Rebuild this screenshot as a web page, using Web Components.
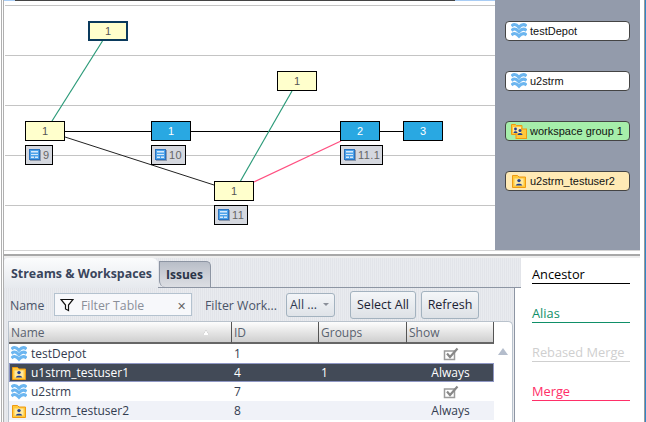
<!DOCTYPE html>
<html>
<head>
<meta charset="utf-8">
<style>
  html, body { margin: 0; padding: 0; background: #fff; }
  body { width: 646px; height: 422px; overflow: hidden; font-family: "Noto Sans", sans-serif; }
</style>
</head>
<body>
<app-window>
  <graph-view slot="graph">
    <graph-node x="88" y="21" selected>1</graph-node>
    <graph-node x="25" y="121">1</graph-node>
    <graph-node x="151" y="121" kind="stream">1</graph-node>
    <graph-node x="277" y="71">1</graph-node>
    <graph-node x="214" y="181">1</graph-node>
    <graph-node x="340" y="121" kind="stream">2</graph-node>
    <graph-node x="403" y="121" kind="stream">3</graph-node>
    <change-label x="25" y="145" w="28">9</change-label>
    <change-label x="151" y="145" w="35">10</change-label>
    <change-label x="214" y="205" w="34">11</change-label>
    <change-label x="340" y="145" w="43">11.1</change-label>
  </graph-view>
  <stream-list slot="streams">
    <stream-pill icon="stream">testDepot</stream-pill>
    <stream-pill icon="stream">u2strm</stream-pill>
    <stream-pill icon="group" tone="group">workspace group 1</stream-pill>
    <stream-pill icon="folder" tone="user">u2strm_testuser2</stream-pill>
  </stream-list>
  <tab-panel slot="panel">
    <filter-bar></filter-bar>
    <stream-table></stream-table>
  </tab-panel>
  <line-legend slot="legend">
    <legend-item color="#000">Ancestor</legend-item>
    <legend-item color="#0f8f68">Alias</legend-item>
    <legend-item color="#cfcfcf">Rebased Merge</legend-item>
    <legend-item color="#ff2f68">Merge</legend-item>
  </line-legend>
</app-window>

<script>
;(function(){

  const icons = {
    stream : `<svg viewBox="0 0 16 16" width="16" height="16"><g fill="none" stroke="#6cb6f0" stroke-width="3.100">
        <path d="M.5 3C3 .8 5 1 8 4.200 10.500 1.500 13 .8 15.500 3"/><path d="M.5 7.500C3 5.300 5 5.500 8 8.700 10.500 6 13 5.300 15.500 7.500"/><path d="M.5 12C3 9.800 5 10 8 13.200 10.500 10.500 13 9.800 15.500 12"/></g></svg>`,
    folder : `<svg viewBox="0 0 16 16" width="16" height="16">
        <path d="M1.500 4V2.500h5L8 4h6.500v10.500h-13z" fill="#ffc93c" stroke="#f09a10"/>
        <rect x="3.500" y="5.500" width="9" height="7" fill="#ffe9a0"/>
        <circle cx="8" cy="7.600" r="1.700" fill="#23408e"/><path d="M4.800 12.500c0-2.400 6.400-2.400 6.400 0z" fill="#23408e"/></svg>`,
    group : `<svg viewBox="0 0 16 16" width="16" height="16">
        <path d="M.5 1.500h4l1 1h5.500v9H.5z" fill="#ffc93c" stroke="#f09a10"/>
        <rect x="5" y="6" width="10.500" height="9.500" fill="#ffc93c" stroke="#f09a10"/>
        <rect x="2" y="4" width="8" height="6" fill="#ffe9a0"/>
        <circle cx="4.500" cy="6" r="1.400" fill="#23408e"/><path d="M2.500 10c0-2.500 4-2.500 4 0z" fill="#23408e"/>
        <circle cx="9" cy="7.500" r="1.500" fill="#23408e"/><path d="M6.500 12c0-2.800 5-2.800 5 0z" fill="#23408e"/></svg>`,
    label : `<svg viewBox="0 0 12 12" width="12" height="12">
        <rect x="1" y="1" width="11" height="11" fill="#8d99ad"/>
        <rect x=".5" y=".5" width="10" height="10" fill="#4da3ea" stroke="#2a72bf"/>
        <path d="M2 2h7v1.500h-7zM2 5h7v1h-7zM2 7.500h3v1.500h-3zM6 7.500h3v1.500h-3z" fill="#d6e9fb"/></svg>`,
    funnel : `<svg viewBox="0 0 14 14" width="14" height="14"><path d="M1 1.500h12L8.500 7v5.500l-3-1.500V7z" fill="#fff" stroke="#111" stroke-width="1.200"/></svg>`,
    check : `<svg viewBox="0 0 16 14" width="16" height="14"><path d="M1.500 4h10v8.500h-10z" fill="#fff" stroke="#9b9b9b" stroke-width="1.500"/>
        <path d="M4 6.500 7 10 14.500 1.500" fill="none" stroke="#888" stroke-width="2.200"/></svg>`,
  };

  class AppIcon extends HTMLElement {
    constructor () { super(); this.attachShadow({ mode : 'open' }); }
    static get observedAttributes () { return ['type']; }
    attributeChangedCallback (attr, oldValue, newValue) {
      this.shadowRoot.innerHTML = `<style>:host { display: inline-flex; flex: none; } svg { display: block; }</style>${icons[newValue]}`;
    }
  }
  customElements.define('app-icon', AppIcon);

  const stripes = 'repeating-linear-gradient(90deg, #e2e4e9 0 1px, #e9ebef 1px 2px)';
  const leftEdge = 'linear-gradient(90deg, #fff 0 1px, #b0b0b0 1px 2px, #fff 2px 3px, #b0b0b0 3px 4px)';
  const rightEdge = 'linear-gradient(90deg, #fff 0 calc(100% - 2px), #999 calc(100% - 2px) calc(100% - 1px), #2f86c8 calc(100% - 1px))';

  class AppWindow extends HTMLElement {
    constructor () {
      super();
      this.attachShadow({ mode : 'open' }).innerHTML = `
        <style>
          :host { display: grid; width: 646px; height: 422px; grid-template-rows: 250px 8px 164px; background: #fff; overflow: hidden; }
          .top { display: grid; grid-template-columns: 495px 145px 6px; }
          .edge { background: ${rightEdge}; }
          .sep { background: ${rightEdge} right / 6px 100% no-repeat,
                             ${leftEdge} left / 4px 100% no-repeat,
                             linear-gradient(#d4d4d4 0 1px, #fff 1px 4px, #a8a8a8 4px 6px, #eee 6px); }
          .bottom { display: grid; grid-template-columns: 4px 517px 120px 5px; }
          .left { background: ${leftEdge}; }
        </style>
        <div class="top"><slot name="graph"></slot><slot name="streams"></slot><div class="edge"></div></div>
        <div class="sep"></div>
        <div class="bottom"><div class="left"></div><slot name="panel"></slot><slot name="legend"></slot><div class="edge"></div></div>`;
    }
  }
  customElements.define('app-window', AppWindow);

  class GraphView extends HTMLElement {
    constructor () {
      super();
      this.attachShadow({ mode : 'open' }).innerHTML = `
        <style>
          :host { display: block; position: relative; height: 250px; background: #fff; overflow: hidden; }
          svg { position: absolute; left: 0; top: 0; }
        </style>
        <svg width="495" height="250">
          <rect x="4" y="0" width="11" height="1" fill="#a9cdf5"/>
          <rect x="15" y="0" width="440" height="1" fill="#444"/>
          <rect x="455" y="0" width="40" height="1" fill="#a9cdf5"/>
          <g fill="#c4c4c4">
            <rect x="5" y="5" width="490" height="1"/><rect x="5" y="55" width="490" height="1"/>
            <rect x="5" y="105" width="490" height="1"/><rect x="5" y="155" width="490" height="1"/>
            <rect x="5" y="205" width="490" height="1"/>
          </g>
          <g fill="#b0b0b0"><rect x="1" y="0" width="1" height="250"/><rect x="3" y="0" width="1" height="250"/></g>
          <g stroke="#000" fill="none">
            <path d="M65 131.500H151M191 131.500H340M380 131.500H403" />
            <path d="M65 137 214 185" stroke="#222"/>
          </g>
          <g stroke="#2a9a78" stroke-width="1.200">
            <path d="M102.500 41 52 121"/><path d="M292 91 240.500 181"/>
          </g>
          <path d="M254 182 341 141" stroke="#ff4f80" stroke-width="1.300"/>
        </svg>
        <slot></slot>`;
    }
  }
  customElements.define('graph-view', GraphView);

  class GraphNode extends HTMLElement {
    constructor () {
      super();
      this.attachShadow({ mode : 'open' }).innerHTML = `
        <style>
          :host { position: absolute; box-sizing: border-box; width: 40px; height: 20px; display: flex; align-items: center; justify-content: center;
                  background: #ffffcc; border: 1px solid #000; font: 11px "Liberation Sans", sans-serif; color: #555; }
          :host([kind=stream]) { background: #29a8e2; color: #fff; }
          :host([selected]) { border: 2px solid #0a3a5c; }
        </style>
        <slot></slot>`;
    }
    connectedCallback () {
      this.style.left = this.getAttribute('x') + 'px';
      this.style.top = this.getAttribute('y') + 'px';
    }
  }
  customElements.define('graph-node', GraphNode);

  class ChangeLabel extends HTMLElement {
    constructor () {
      super();
      this.attachShadow({ mode : 'open' }).innerHTML = `
        <style>
          :host { position: absolute; box-sizing: border-box; height: 20px; display: flex; align-items: center; gap: 2px; padding-left: 3px;
                  background: #d5d8df; border: 1px solid #000; font: 11px "Liberation Sans", sans-serif; color: #666; letter-spacing: .4px; }
        </style>
        <app-icon type="label"></app-icon><slot></slot>`;
    }
    connectedCallback () {
      this.style.left = this.getAttribute('x') + 'px';
      this.style.top = this.getAttribute('y') + 'px';
      this.style.width = this.getAttribute('w') + 'px';
    }
  }
  customElements.define('change-label', ChangeLabel);

  class StreamList extends HTMLElement {
    constructor () {
      super();
      this.attachShadow({ mode : 'open' }).innerHTML = `
        <style>
          :host { display: flex; flex-direction: column; gap: 30px; padding: 21px 10px 0; background: #939bab; height: 250px; box-sizing: border-box; }
        </style>
        <slot></slot>`;
    }
  }
  customElements.define('stream-list', StreamList);

  class StreamPill extends HTMLElement {
    constructor () {
      super();
      this.attachShadow({ mode : 'open' });
    }
    connectedCallback () {
      this.shadowRoot.innerHTML = `
        <style>
          :host { display: flex; align-items: center; gap: 3px; box-sizing: border-box; width: 125px; height: 20px; padding-left: 5px;
                  background: #fff; border: 1px solid #444; border-radius: 4px; font: 11px "Liberation Sans", sans-serif; color: #111; white-space: nowrap; }
          :host([tone=group]) { background: #a6eeaa; }
          :host([tone=user]) { background: #ffeab5; }
        </style>
        <app-icon type="${this.getAttribute('icon')}"></app-icon><slot></slot>`;
    }
  }
  customElements.define('stream-pill', StreamPill);

  class TabPanel extends HTMLElement {
    constructor () {
      super();
      this.attachShadow({ mode : 'open' }).innerHTML = `
        <style>
          :host { display: block; height: 164px; }
          .strip { height: 30px; box-sizing: border-box; display: flex; align-items: flex-end; background: ${stripes}; border-bottom: 1px solid #8d95a3; }
          .tab { font: bold 12px "Open Sans", sans-serif; color: #39455c; display: flex; align-items: center; }
          .on { width: 154px; height: 30px; margin-bottom: -1px; padding-left: 7px; box-sizing: border-box; background: linear-gradient(#fbfcfd, #e6e9ee); border-radius: 4px 6px 0 0; font-size: 12.400px; }
          .off { width: 52px; height: 26px; margin-left: 1px; padding-left: 6px; box-sizing: border-box; background: linear-gradient(#b9bec8, #cfd2d9 60%, #dcdee3); border: 1px solid #8d95a3; border-bottom: 0; border-radius: 0 5px 0 6px; color: #2b3448; }
          .body { background: ${stripes}; border-right: 1px solid #8d95a3; margin-right: 6px; height: 134px; box-sizing: border-box; padding: 0 0 0 4px; }
        </style>
        <div class="strip"><div class="tab on">Streams &amp; Workspaces</div><div class="tab off">Issues</div></div>
        <div class="body"><slot></slot></div>`;
    }
  }
  customElements.define('tab-panel', TabPanel);

  class FilterBar extends HTMLElement {
    constructor () {
      super();
      this.attachShadow({ mode : 'open' }).innerHTML = `
        <style>
          :host { display: flex; align-items: center; height: 33px; font: 12.300px "Open Sans", sans-serif; color: #4a5468; box-sizing: border-box; }
          .name { width: 46px; padding: 2px 0 0 2px; box-sizing: border-box; }
          .filter { width: 138px; height: 23px; box-sizing: border-box; display: flex; align-items: center; gap: 7px; padding: 0 5px; margin-right: 13px;
                    background: #f7f8fb; border: 1px solid #b4c2cf; color: #8a8f99; }
          .filter span { flex: 1; padding-top: 2px; }
          .x { flex: none !important; color: #666; font-size: 11px; }
          .work { width: 81px; padding-top: 2px; }
          .select { width: 49px; height: 24px; box-sizing: border-box; display: flex; align-items: center; justify-content: space-between; padding: 0 5px 0 3px; margin-right: 15px;
                    background: linear-gradient(#f3f5f8, #dfe3e8); border: 1px solid #a3b2bf; border-radius: 3px; color: #2f3a52; }
          .caret { width: 0; height: 0; border: 3px solid transparent; border-top: 3px solid #8a8f99; border-bottom: 0; }
          button { height: 28px; box-sizing: border-box; font: inherit; font-size: 12.500px; color: #1c2233; padding: 0; background: linear-gradient(#f4f6f8, #dde1e6); border: 1px solid #a3b2bf; border-radius: 3px; }
          .all { width: 66px; margin-right: 5px; }
          .refresh { width: 58px; }
        </style>
        <span class="name">Name</span>
        <div class="filter"><app-icon type="funnel"></app-icon><span>Filter Table</span><span class="x">&#x2715;</span></div>
        <span class="work">Filter Work...</span>
        <div class="select">All ...<i class="caret"></i></div>
        <button class="all">Select All</button>
        <button class="refresh">Refresh</button>`;
    }
  }
  customElements.define('filter-bar', FilterBar);

  const rows = [
    { icon : 'stream', name : 'testDepot', id : '1', groups : '', show : 'check' },
    { icon : 'folder', name : 'u1strm_testuser1', id : '4', groups : '1', show : 'Always', selected : true },
    { icon : 'stream', name : 'u2strm', id : '7', groups : '', show : 'check' },
    { icon : 'folder', name : 'u2strm_testuser2', id : '8', groups : '', show : 'Always', alt : true },
  ];

  class StreamTable extends HTMLElement {
    constructor () {
      super();
      const cells = r => `
        <div class="cell name"><app-icon type="${r.icon}"></app-icon>${r.name}</div>
        <div class="cell">${r.id}</div>
        <div class="cell">${r.groups}</div>
        <div class="cell show">${r.show === 'check' ? '<app-icon type="check"></app-icon>' : r.show}</div>`;
      this.attachShadow({ mode : 'open' }).innerHTML = `
        <style>
          :host { display: flex; height: 101px; margin-right: 1px; box-sizing: border-box; background: #fff; border: 1px solid #b9c2cc; border-bottom: 0; border-radius: 0 5px 0 0; font: 12px "Open Sans", sans-serif; color: #333c50; }
          .table { width: 485px; flex: none; }
          .row, .head { display: grid; grid-template-columns: 223px 87px 88px 87px; }
          .head { height: 22px; }
          .head div { box-sizing: border-box; padding-left: 2px; display: flex; align-items: center; justify-content: space-between; color: #59626f;
                      background: linear-gradient(#fdfdfd, #e8e8e8 45%, #cfcfcf); border-right: 1px solid #555; border-bottom: 2px solid #666; }
          .sort { width: 0; height: 0; border: 3px solid transparent; border-bottom: 5px solid #fff; border-top: 0; margin-right: 22px; filter: drop-shadow(0 0 .5px #777); }
          .row { height: 19px; }
          .row.selected { background: #424a57; color: #fff; outline: 1px solid #8f97c4; outline-offset: -1px; }
          .row.alt { background: #f0f2f8; }
          .cell { display: flex; align-items: center; padding-left: 2px; white-space: nowrap; }
          .name { gap: 4px; padding-left: 2px; }
          .show { justify-content: center; padding-left: 0; }
          .scroll { flex: 1; display: flex; justify-content: center; padding-top: 26px; }
          .up { width: 0; height: 0; border: 5px solid transparent; border-bottom: 7px solid #b4bdcc; border-top: 0; }
        </style>
        <div class="table">
          <div class="head"><div>Name<i class="sort"></i></div><div>ID</div><div>Groups</div><div>Show</div></div>
          ${rows.map(r => `<div class="row${r.selected ? ' selected' : ''}${r.alt ? ' alt' : ''}">${cells(r)}</div>`).join('')}
        </div>
        <div class="scroll"><i class="up"></i></div>`;
    }
  }
  customElements.define('stream-table', StreamTable);

  class LineLegend extends HTMLElement {
    constructor () {
      super();
      this.attachShadow({ mode : 'open' }).innerHTML = `
        <style>
          :host { display: flex; flex-direction: column; gap: 21px; padding: 8px 11px 0 11px; background: #fff; box-sizing: border-box; height: 164px; }
        </style>
        <slot></slot>`;
    }
  }
  customElements.define('line-legend', LineLegend);

  class LegendItem extends HTMLElement {
    constructor () {
      super();
      this.attachShadow({ mode : 'open' }).innerHTML = `
        <style>
          :host { display: block; height: 18px; box-sizing: border-box; font: 12.800px/16px "Open Sans", sans-serif; border-bottom: 1px solid currentColor; }
        </style>
        <slot></slot>`;
    }
    connectedCallback () { this.style.color = this.getAttribute('color'); }
  }
  customElements.define('legend-item', LegendItem);

})();
</script>
</body>
</html>
